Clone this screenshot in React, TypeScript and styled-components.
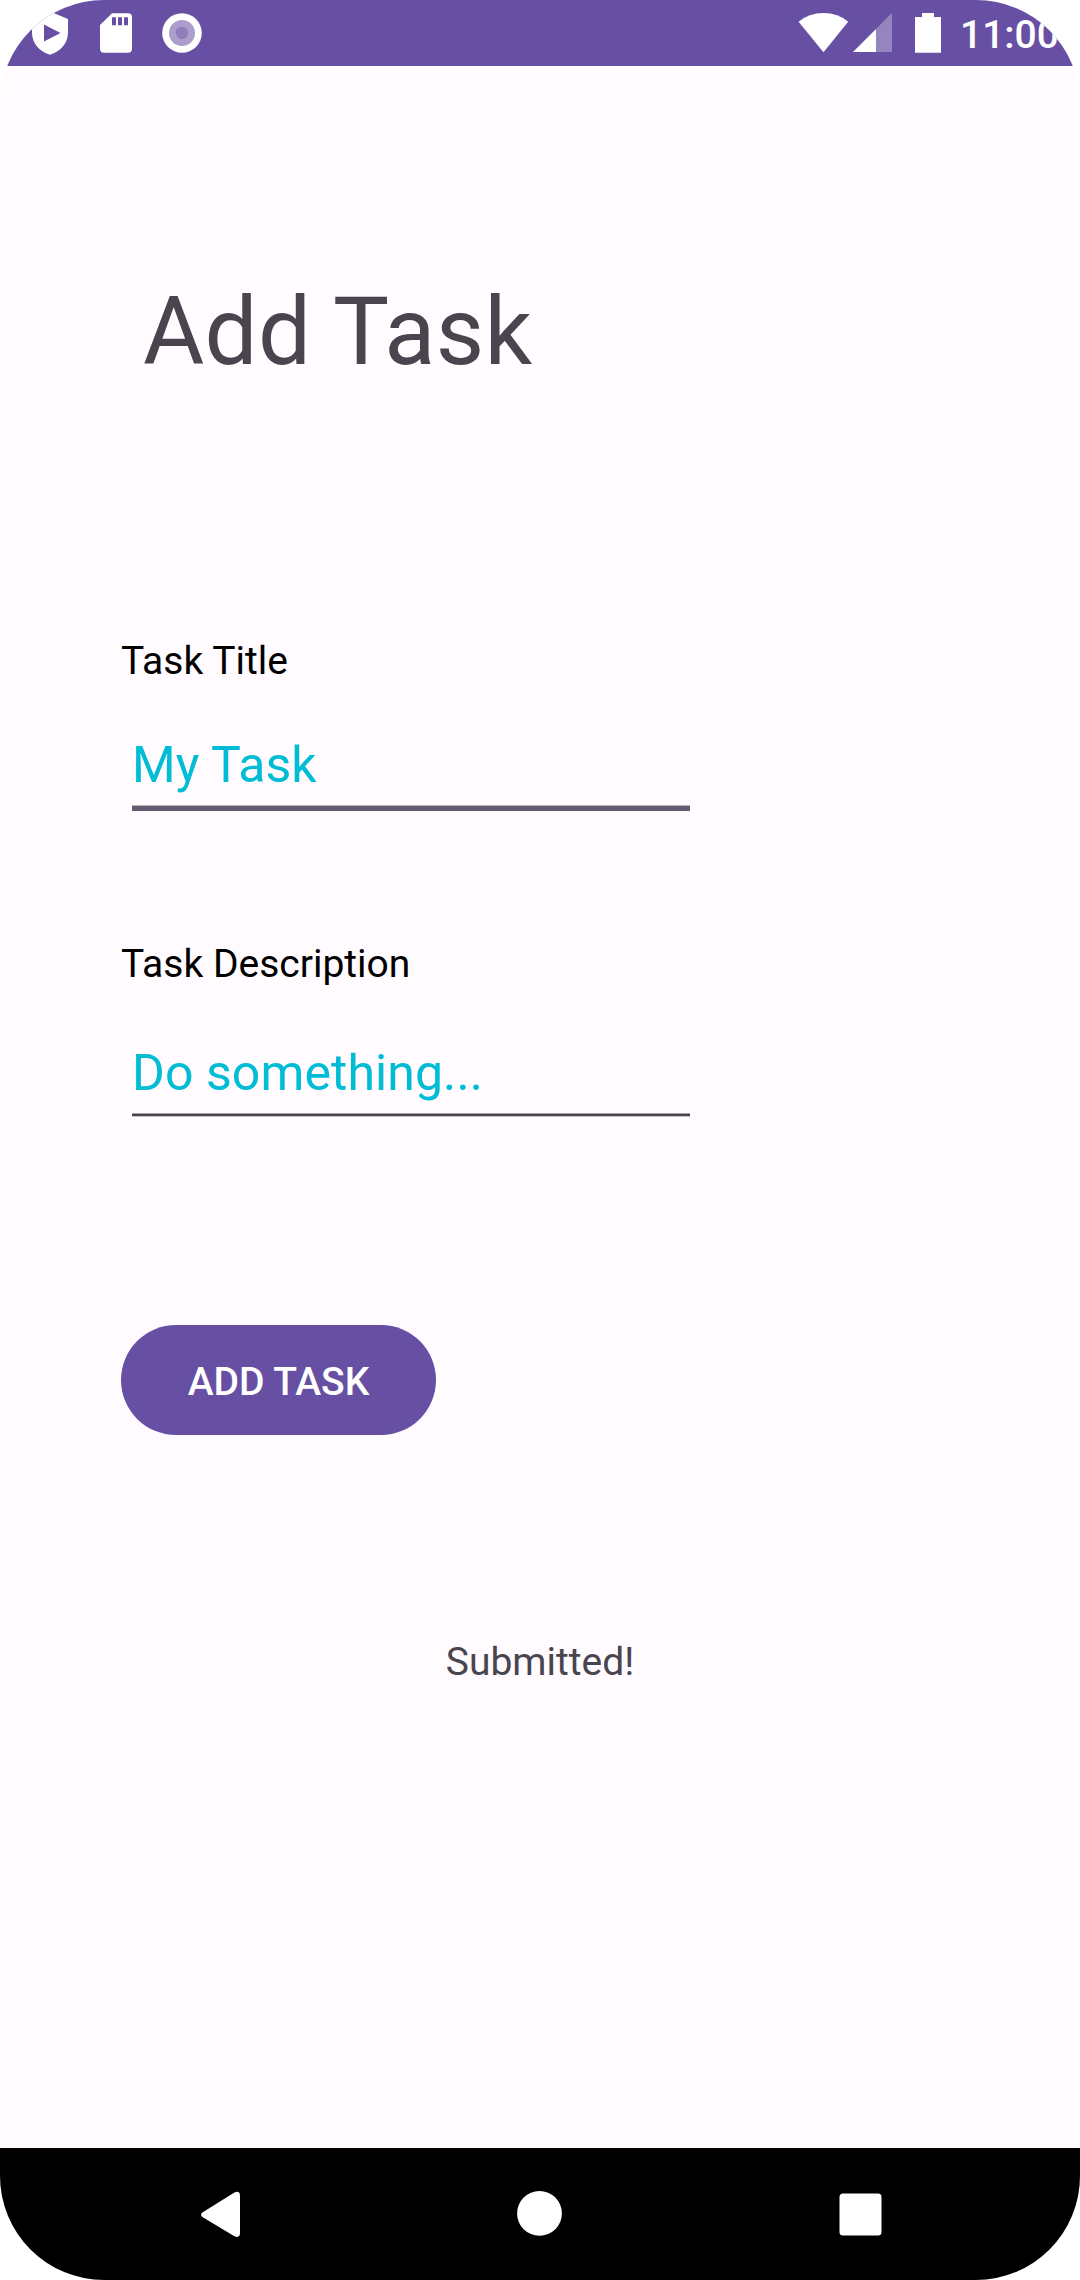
import React, { useState } from 'react';
import styled, { createGlobalStyle } from 'styled-components';

const GlobalStyle = createGlobalStyle`
  *, *::before, *::after { box-sizing: border-box; }
  body {
    margin: 0;
    background: #ffffff;
    font-family: Roboto, "Noto Sans", sans-serif;
  }
`;

const Screen = styled.div`
  display: flex;
  flex-direction: column;
  width: 1080px;
  height: 2280px;
  overflow: hidden;
  border-radius: 104px;
  background: #fffbff;
`;

const StatusBar = styled.header`
  display: flex;
  justify-content: space-between;
  flex: none;
  height: 66px;
  background: #6750a3;
  color: #ffffff;
`;

const StatusGroup = styled.div`
  display: flex;
  align-items: flex-start;
`;

const StatusIcon = styled.svg`
  display: block;
  flex: none;
  height: 66px;
`;

const Clock = styled.time`
  width: 120px;
  padding-top: 12px;
  font-size: 39px;
  font-weight: 500;
  line-height: 46px;
  white-space: nowrap;
`;

const Content = styled.main`
  display: flex;
  flex-direction: column;
  flex: 1;
  padding: 211px 121px 0;
`;

const Title = styled.h1`
  margin: 0 0 251px 22px;
  color: #49454f;
  font-size: 94px;
  font-weight: 400;
  line-height: 110px;
  letter-spacing: 0.3px;
`;

const Form = styled.form`
  display: flex;
  flex-direction: column;
  align-items: flex-start;
`;

const Field = styled.div<{ $height: number; $gap: number }>`
  display: flex;
  flex-direction: column;
  gap: ${(p) => p.$gap}px;
  height: ${(p) => p.$height}px;
`;

const Label = styled.label`
  color: #000000;
  font-size: 39px;
  line-height: 46px;
`;

const Input = styled.input`
  display: block;
  width: 558px;
  height: 58px;
  margin-left: 11px;
  padding: 0;
  border: 0;
  outline: 0;
  background: transparent;
  color: #00bcd4;
  font: 400 50px/58px Roboto, "Noto Sans", sans-serif;
  letter-spacing: 0.08px;
`;

const InputBox = styled.div<{ $active: boolean }>`
  &::after {
    content: "";
    display: block;
    width: 558px;
    height: ${(p) => (p.$active ? 6 : 4)}px;
    margin: 11px 0 0 11px;
    background: ${(p) =>
      p.$active
        ? 'linear-gradient(#b9b5bd 1px, #625b71 1px)'
        : 'linear-gradient(#a4a2a7 1px, #49454f 1px 3px, #c8c5ca 3px)'};
  }
`;

const SubmitButton = styled.button`
  width: 315px;
  height: 110px;
  padding: 3px 0 0;
  border: 0;
  border-radius: 55px;
  background: #6750a3;
  color: #ffffff;
  font: 500 39px/46px Roboto, "Noto Sans", sans-serif;
  text-transform: uppercase;
`;

const Message = styled.p`
  margin: 204px 0 0;
  color: #49454f;
  font-size: 39px;
  line-height: 46px;
  text-align: center;
`;

const NavBar = styled.nav`
  display: flex;
  justify-content: space-between;
  flex: none;
  height: 132px;
  padding: 36px 190px 0;
  background: #000000;
`;

const NavButton = styled.button`
  width: 60px;
  height: 60px;
  padding: 0;
  border: 0;
  background: transparent;

  svg { display: block; }
`;

export default function App() {
  const [title, setTitle] = useState('My Task');
  const [description, setDescription] = useState('Do something...');

  return (
    <>
      <GlobalStyle />
      <Screen>
        <StatusBar>
          <StatusGroup>
            <StatusIcon width="210" viewBox="0 0 210 66" fill="#fff">
              <path fillRule="evenodd" d="M50 11.5 68 19V32.5C68 43 61 51.5 50 54.7 39 51.5 32 43 32 32.5V19ZM44 24.5V41.5L60.5 33Z" />
              <path fillRule="evenodd" d="M112 13.3H128Q132 13.3 132 17.3V48.7Q132 52.7 128 52.7H104Q100 52.7 100 48.7V25ZM112 17.3V25.3H116V17.3ZM118 17.3V25.3H122V17.3ZM124 17.3V25.3H128V17.3Z" />
              <circle cx="182" cy="33" r="19.8" />
              <circle cx="182" cy="33" r="13" fill="#ab9dcc" />
              <circle cx="182" cy="33" r="6.2" fill="#907eba" />
            </StatusIcon>
          </StatusGroup>
          <StatusGroup>
            <StatusIcon width="166" viewBox="794 0 166 66" fill="#fff">
              <path d="M798.6 21.7Q809 13 823.5 13T848.2 21.7L823.5 52.2Z" />
              <path d="M876 29V52H853Z" />
              <path d="M876 29 892 13V52H876Z" fill="#9585be" />
              <path d="M922 13H934V17H941V52.7H915V17H922Z" />
            </StatusIcon>
            <Clock>11:00</Clock>
          </StatusGroup>
        </StatusBar>
        <Content>
          <Title>Add Task</Title>
          <Form onSubmit={(e) => e.preventDefault()}>
            <Field $height={303} $gap={52}>
              <Label htmlFor="title">Task Title</Label>
              <InputBox $active>
                <Input id="title" value={title} onChange={(e) => setTitle(e.target.value)} />
              </InputBox>
            </Field>
            <Field $height={384} $gap={57}>
              <Label htmlFor="description">Task Description</Label>
              <InputBox $active={false}>
                <Input id="description" value={description} onChange={(e) => setDescription(e.target.value)} />
              </InputBox>
            </Field>
            <SubmitButton type="submit">Add Task</SubmitButton>
          </Form>
          <Message>Submitted!</Message>
        </Content>
        <NavBar>
          <NavButton aria-label="Back">
            <svg width="60" height="60" viewBox="190 2184 60 60" fill="#fff">
              <path d="M202.8 2212.2 234.4 2192.4Q240 2190 240 2196V2232.6Q240 2238.8 234.4 2236.2L202.8 2217.2Q199.2 2214.7 202.8 2212.2Z" />
            </svg>
          </NavButton>
          <NavButton aria-label="Home">
            <svg width="60" height="60" viewBox="510 2184 60 60" fill="#fff">
              <circle cx="539.5" cy="2213.4" r="22.4" />
            </svg>
          </NavButton>
          <NavButton aria-label="Overview">
            <svg width="60" height="60" viewBox="830 2184 60 60" fill="#fff">
              <rect x="839.5" y="2193.5" width="42" height="42" rx="3.5" />
            </svg>
          </NavButton>
        </NavBar>
      </Screen>
    </>
  );
}
